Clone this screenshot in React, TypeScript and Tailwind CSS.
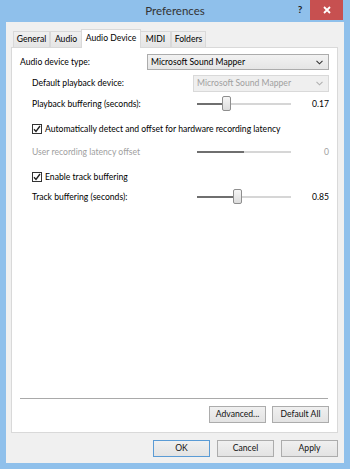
import React from 'react'

const font = "font-['Lato','Liberation_Sans',sans-serif]"

const Chevron = ({ color }: { color: string }) => (
  <svg width="7" height="5" viewBox="0 0 7 5">
    <path d="M0.5 0.8 L3.5 3.8 L6.5 0.8" fill="none" stroke={color} strokeWidth="1.1" />
  </svg>
)

const CheckBox = () => (
  <div className="w-[10px] h-[10px] border border-[#333] bg-white flex items-center justify-center shrink-0">
    <svg width="8" height="8" viewBox="0 0 8 8">
      <path d="M1 4.2 L3 6.4 L7 1" fill="none" stroke="#222" strokeWidth="1.4" />
    </svg>
  </div>
)

const Slider = ({ pos, disabled }: { pos: number; disabled?: boolean }) => (
  <div className="w-[94px] h-[16px] flex items-center">
    <div className="relative w-full h-[2px] bg-[#d6d6d6]">
      <div className="absolute left-0 top-0 h-[2px] bg-[#6f6f6f]" style={{ width: pos }} />
      {!disabled && (
        <div
          className="absolute top-[-7px] w-[9px] h-[15px] rounded-[2px] border border-[#8e8e8e] bg-gradient-to-b from-[#f6f6f6] to-[#dcdcdc]"
          style={{ left: pos - 4 }}
        />
      )}
    </div>
  </div>
)

const Button = ({ label, primary }: { label: string; primary?: boolean }) => (
  <div
    className={`w-[57px] h-[17px] flex items-center justify-center border bg-gradient-to-b from-[#f0f0f0] to-[#e3e3e3] text-[#111] ${
      primary ? 'border-[#5a9bd5]' : 'border-[#acacac]'
    }`}
  >
    {label}
  </div>
)

const tabs = [
  { name: 'General', w: 'w-[37px]' },
  { name: 'Audio', w: 'w-[32px]' },
  { name: 'Audio Device', w: 'w-[60px]', active: true },
  { name: 'MIDI', w: 'w-[31px]' },
  { name: 'Folders', w: 'w-[35px]' },
]

export default function App() {
  return (
    <div className={`w-[350px] h-[469px] bg-[#8fc0eb] flex flex-col overflow-hidden text-[8.6px] leading-none ${font}`}>
      {/* Title bar */}
      <div className="h-[22px] flex items-start shrink-0">
        <div className="w-[60px]" />
        <div className="flex-1 text-center text-[11.5px] text-[#333] pt-[5px]">Preferences</div>
        <div className="w-[60px] flex items-start">
          <div className="w-[20px] text-center text-[10px] font-bold text-[#222] pt-[4px]">?</div>
          <div className="w-[33px] h-[20px] bg-[#c75050] flex items-center justify-center">
            <svg width="8" height="8" viewBox="0 0 8 8">
              <path d="M1 1 L7 7 M7 1 L1 7" stroke="#fff" strokeWidth="1.8" />
            </svg>
          </div>
        </div>
      </div>

      {/* Client */}
      <div className="flex-1 mx-[6px] mb-[6px] bg-[#f0f0f0] flex flex-col pt-[7px] pl-[5px] pr-[6px] pb-[6px]">
        {/* Tabs */}
        <div className="flex items-end h-[18px] pl-[2px]">
          {tabs.map((t) =>
            t.active ? (
              <div
                key={t.name}
                className={`${t.w} h-[19px] -mb-px -mx-[1px] relative z-10 bg-white border border-b-0 border-[#d9d9d9] flex items-center justify-center pb-[2px] text-black`}
              >
                {t.name}
              </div>
            ) : (
              <div
                key={t.name}
                className={`${t.w} h-[16px] bg-gradient-to-b from-[#f0f0f0] to-[#e5e5e5] border border-b-0 border-[#d9d9d9] flex items-center justify-center text-black`}
              >
                {t.name}
              </div>
            )
          )}
        </div>

        {/* Panel */}
        <div className="flex-1 bg-white border border-[#d9d9d9] flex flex-col px-[8px] pt-[6px] pb-[9px] text-black">
          <div className="h-[16px] flex items-center">
            <span>Audio device type:</span>
            <div className="ml-auto w-[182px] h-[16px] border border-[#acacac] bg-gradient-to-b from-[#f2f2f2] to-[#e5e5e5] flex items-center px-[3px]">
              <span>Microsoft Sound Mapper</span>
              <span className="ml-auto mr-[2px]"><Chevron color="#333" /></span>
            </div>
          </div>

          <div className="h-[17px] mt-[5px] flex items-center pl-[12px]">
            <span>Default playback device:</span>
            <div className="ml-auto w-[136px] h-[17px] border border-[#d9d9d9] bg-[#efefef] flex items-center px-[3px] text-[#a0a0a0]">
              <span>Microsoft Sound Mapper</span>
              <span className="ml-auto mr-[2px]"><Chevron color="#b0b0b0" /></span>
            </div>
          </div>

          <div className="h-[16px] mt-[4px] flex items-center pl-[12px]">
            <span className="flex-1">Playback buffering (seconds):</span>
            <Slider pos={29} />
            <span className="w-[38px] text-right">0.17</span>
          </div>

          <div className="h-[16px] mt-[9px] flex items-center pl-[12px] gap-[3px]">
            <CheckBox />
            <span>Automatically detect and offset for hardware recording latency</span>
          </div>

          <div className="h-[16px] mt-[7px] flex items-center pl-[12px] text-[#a0a0a0]">
            <span className="flex-1">User recording latency offset</span>
            <Slider pos={47} disabled />
            <span className="w-[38px] text-right">0</span>
          </div>

          <div className="h-[16px] mt-[9px] flex items-center pl-[12px] gap-[3px]">
            <CheckBox />
            <span>Enable track buffering</span>
          </div>

          <div className="h-[16px] mt-[4px] flex items-center pl-[12px]">
            <span className="flex-1">Track buffering (seconds):</span>
            <Slider pos={40} />
            <span className="w-[38px] text-right">0.85</span>
          </div>

          <div className="flex-1" />
          <div className="border-t border-[#a9a9a9] mr-[1px]" />
          <div className="flex justify-end gap-[6px] mt-[7px]">
            <Button label="Advanced..." />
            <Button label="Default All" />
          </div>
        </div>

        {/* Dialog buttons */}
        <div className="flex justify-end gap-[7px] mt-[7px]">
          <Button label="OK" primary />
          <Button label="Cancel" />
          <Button label="Apply" />
        </div>
      </div>
    </div>
  )
}
